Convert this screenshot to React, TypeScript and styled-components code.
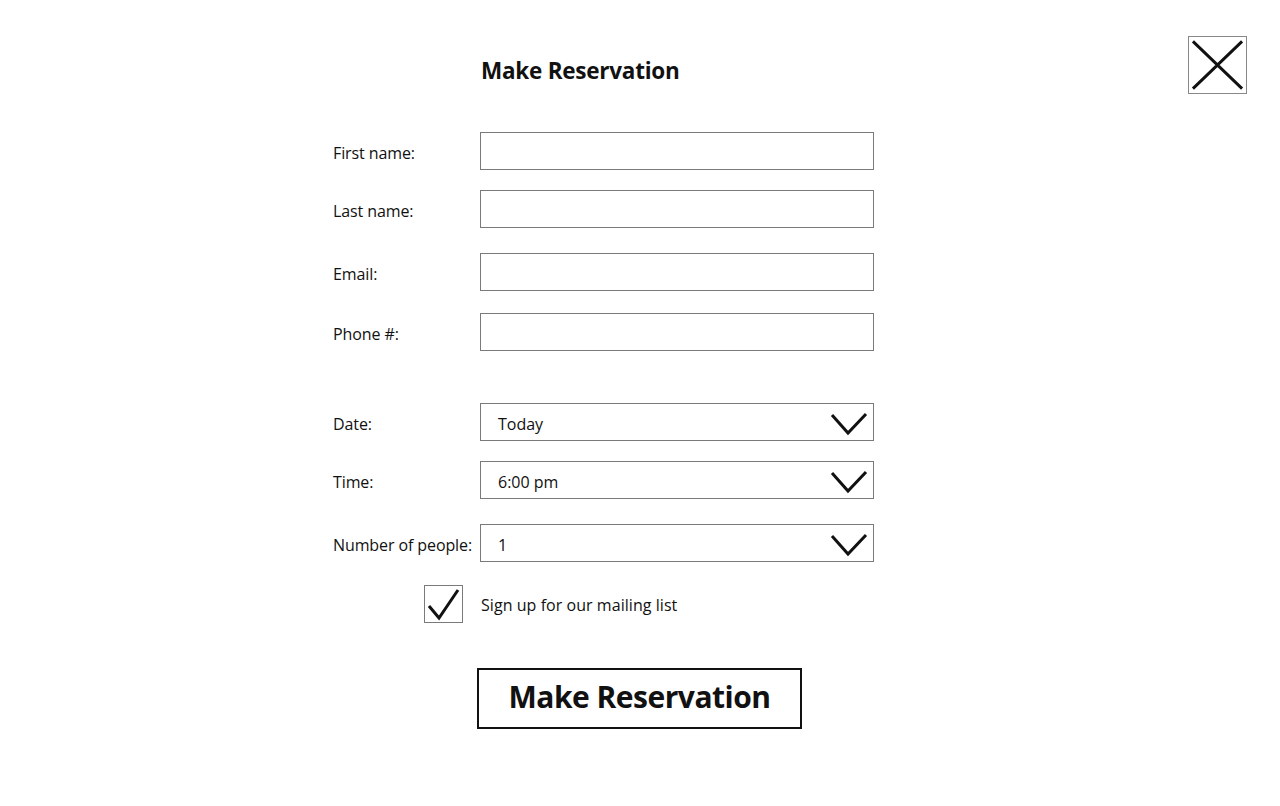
import React, { useState } from 'react'
import styled, { createGlobalStyle } from 'styled-components'

const GlobalStyle = createGlobalStyle`
  html, body {
    margin: 0;
    padding: 0;
    background: #fff;
  }
  body {
    font-family: 'Open Sans', 'Liberation Sans', sans-serif;
    color: #111;
  }
`

const Page = styled.div`
  position: relative;
  width: 1280px;
  height: 806px;
  display: flex;
  justify-content: flex-start;
`

const CloseButton = styled.button`
  position: absolute;
  top: 36px;
  left: 1188px;
  width: 59px;
  height: 58px;
  padding: 0;
  border: 1px solid #888;
  background: #fff;
  display: flex;
  align-items: center;
  justify-content: center;
  cursor: pointer;
`

const Form = styled.form`
  margin-left: 333px;
  padding-top: 53px;
  display: flex;
  flex-direction: column;
  width: 541px;
`

const Title = styled.h1`
  margin: 0 0 0 148px;
  font-size: 22.5px;
  font-weight: 700;
  line-height: 36px;
  letter-spacing: -0.25px;
`

const Row = styled.div<{ $top: number }>`
  display: flex;
  align-items: center;
  height: 38px;
  margin-top: ${(p) => p.$top}px;
`

const Label = styled.label`
  width: 147px;
  padding-top: 3px;
  font-size: 16px;
  letter-spacing: -0.1px;
`

const TextInput = styled.input`
  box-sizing: border-box;
  width: 394px;
  height: 38px;
  border: 1px solid #7a7a7a;
  outline: none;
  padding: 0 17px;
  font: inherit;
`

const Select = styled.div`
  box-sizing: border-box;
  width: 394px;
  height: 38px;
  border: 1px solid #7a7a7a;
  display: flex;
  align-items: center;
  justify-content: space-between;
  padding: 3px 5px 0 17px;
  font-size: 16px;
`

const CheckRow = styled.div`
  display: flex;
  align-items: center;
  margin-top: 23px;
  margin-left: 91px;
  height: 38px;
`

const CheckBox = styled.button`
  box-sizing: border-box;
  width: 39px;
  height: 38px;
  padding: 0;
  border: 1px solid #7a7a7a;
  background: #fff;
  display: flex;
  align-items: center;
  justify-content: center;
  margin-right: 18px;
  cursor: pointer;
`

const CheckLabel = styled.span`
  padding-top: 2px;
  font-size: 16px;
  letter-spacing: 0.05px;
`

const SubmitButton = styled.button`
  box-sizing: border-box;
  align-self: flex-start;
  margin-top: 45px;
  margin-left: 144px;
  width: 325px;
  height: 61px;
  padding: 0 0 4px;
  border: 2px solid #111;
  background: #fff;
  font-family: inherit;
  font-size: 30px;
  font-weight: 700;
  letter-spacing: -0.5px;
  color: #111;
  cursor: pointer;
`

const Chevron = () => (
  <svg width='38' height='26' viewBox='0 0 38 26'>
    <path d='M2 4 L18 22 L36 3' fill='none' stroke='#111' strokeWidth='3' />
  </svg>
)

const FIELDS = [
  { label: 'First name:', top: 43 },
  { label: 'Last name:', top: 20 },
  { label: 'Email:', top: 25 },
  { label: 'Phone #:', top: 22 },
]

const SELECTS = [
  { label: 'Date:', value: 'Today', top: 52 },
  { label: 'Time:', value: '6:00 pm', top: 20 },
  { label: 'Number of people:', value: '1', top: 25 },
]

export default function App() {
  const [subscribed, setSubscribed] = useState(true)

  return (
    <Page>
      <GlobalStyle />
      <CloseButton aria-label='Close'>
        <svg width='58' height='56' viewBox='0 0 58 56'>
          <path d='M4 4 L54 52 M54 4 L4 52' stroke='#111' strokeWidth='3' />
        </svg>
      </CloseButton>

      <Form onSubmit={(e) => e.preventDefault()}>
        <Title>Make Reservation</Title>

        {FIELDS.map((f) => (
          <Row key={f.label} $top={f.top}>
            <Label>{f.label}</Label>
            <TextInput />
          </Row>
        ))}

        {SELECTS.map((s) => (
          <Row key={s.label} $top={s.top}>
            <Label>{s.label}</Label>
            <Select>
              {s.value}
              <Chevron />
            </Select>
          </Row>
        ))}

        <CheckRow>
          <CheckBox type='button' onClick={() => setSubscribed(!subscribed)}>
            {subscribed && (
              <svg width='36' height='36' viewBox='0 0 36 36'>
                <path d='M3 20 L13 32 L32 4' fill='none' stroke='#111' strokeWidth='3' />
              </svg>
            )}
          </CheckBox>
          <CheckLabel>Sign up for our mailing list</CheckLabel>
        </CheckRow>

        <SubmitButton type='submit'>Make Reservation</SubmitButton>
      </Form>
    </Page>
  )
}
